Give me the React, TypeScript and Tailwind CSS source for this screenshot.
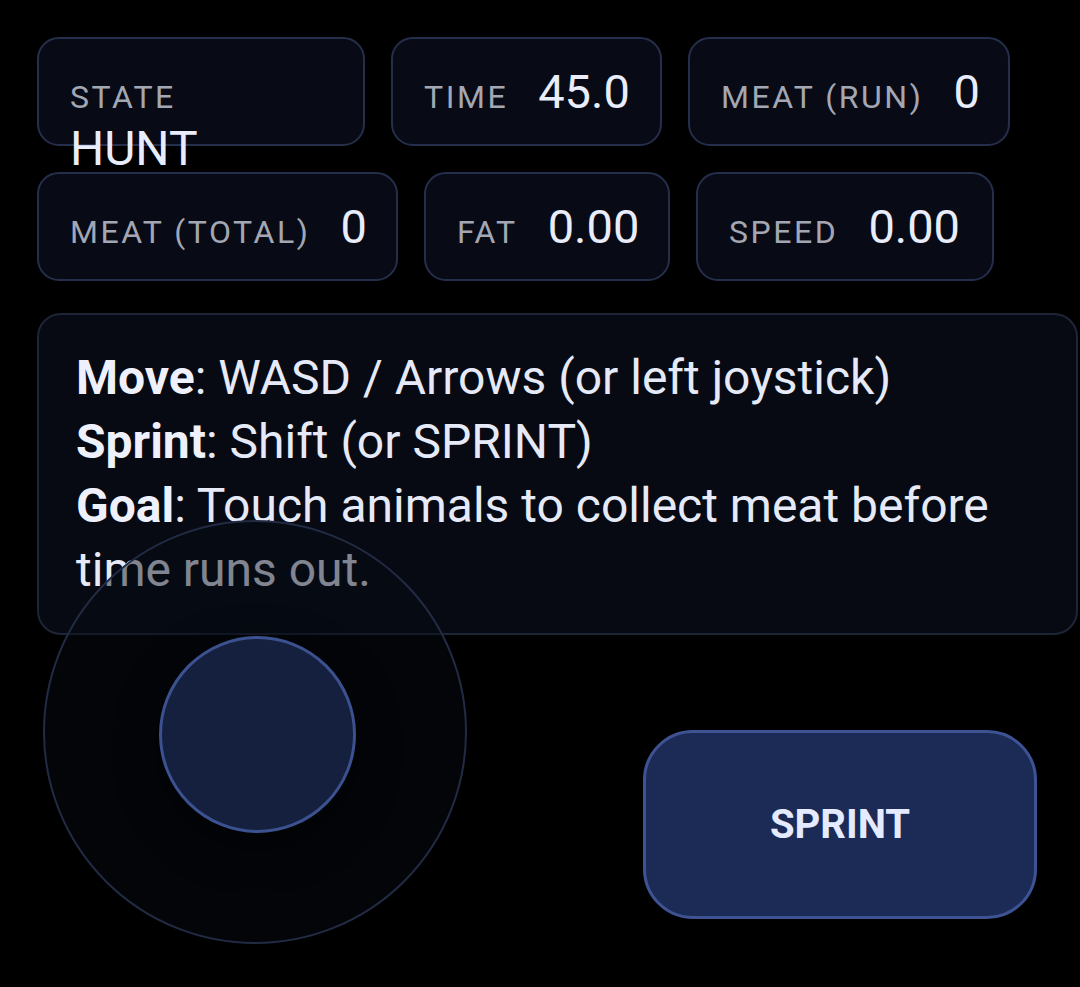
import React from 'react';

interface StatProps {
  label: string;
  value: string;
  width: string;
}

const Stat: React.FC<StatProps> = ({ label, value, width }) => {
  return (
    <div
      className={`${width} h-[109px] shrink-0 flex items-center pl-[31px] rounded-[22px] border-2 border-[#252f4c] bg-[#080b15]`}
    >
      <div className="flex items-baseline gap-[30px] whitespace-nowrap">
        <span className="text-[32px] leading-[36px] tracking-[0.08em] text-[#a3a7b3]">{label}</span>
        <span className="text-[47px] leading-[55px] text-[#e9edfb]">{value}</span>
      </div>
    </div>
  );
};

const App: React.FC = () => {
  return (
    <div
      className="relative w-[1080px] h-[987px] overflow-hidden bg-black"
      style={{ fontFamily: 'Roboto, "Noto Sans", sans-serif' }}
    >
      <div className="flex flex-col pl-[37px] pt-[37px] pr-[2px]">
        {/* Stats */}
        <div className="flex flex-col gap-[26px]">
          <div className="flex gap-[26px]">
            <div className="w-[328px] h-[109px] shrink-0 pl-[31px] pt-[40px] rounded-[22px] border-2 border-[#252f4c] bg-[#080b15]">
              <div className="text-[32px] leading-[36px] tracking-[0.08em] text-[#a3a7b3]">STATE</div>
              <div className="mt-[5px] text-[48px] leading-[58px] text-[#e9edfb]">HUNT</div>
            </div>
            <Stat label="TIME" value="45.0" width="w-[271px]" />
            <Stat label="MEAT (RUN)" value="0" width="w-[322px]" />
          </div>
          <div className="flex gap-[26px]">
            <Stat label="MEAT (TOTAL)" value="0" width="w-[361px]" />
            <Stat label="FAT" value="0.00" width="w-[246px]" />
            <Stat label="SPEED" value="0.00" width="w-[298px]" />
          </div>
        </div>

        {/* Help */}
        <div className="mt-[32px] rounded-[24px] border-2 border-[#1d2537] bg-[#070a12] pl-[37px] pr-6 py-[31px] text-[48px] leading-[64px] text-[#e6eaf8]">
          <div>
            <b className="font-bold text-[#eef1fc]">Move</b>: WASD / Arrows (or left joystick)
          </div>
          <div>
            <b className="font-bold text-[#eef1fc]">Sprint</b>: Shift (or SPRINT)
          </div>
          <div>
            <b className="font-bold text-[#eef1fc]">Goal</b>: Touch animals to collect meat before time runs out.
          </div>
        </div>
      </div>

      {/* Joystick */}
      <div className="absolute left-[43px] top-[520px] w-[424px] h-[424px] rounded-full border-2 border-[#222b44] bg-[rgba(7,10,20,0.45)] flex items-center justify-center">
        <div className="ml-[4px] mt-[4px] w-[197px] h-[197px] rounded-full border-[3px] border-[#3c5190] bg-[#15203f] shadow-[0_14px_40px_rgba(0,0,0,0.55)]" />
      </div>

      {/* Sprint button */}
      <button className="absolute left-[643px] top-[730px] w-[394px] h-[189px] rounded-[50px] border-[3px] border-[#3d5394] bg-[#1c2a56] text-[40px] font-bold text-[#e4eaff]">
        SPRINT
      </button>
    </div>
  );
};

export default App;
